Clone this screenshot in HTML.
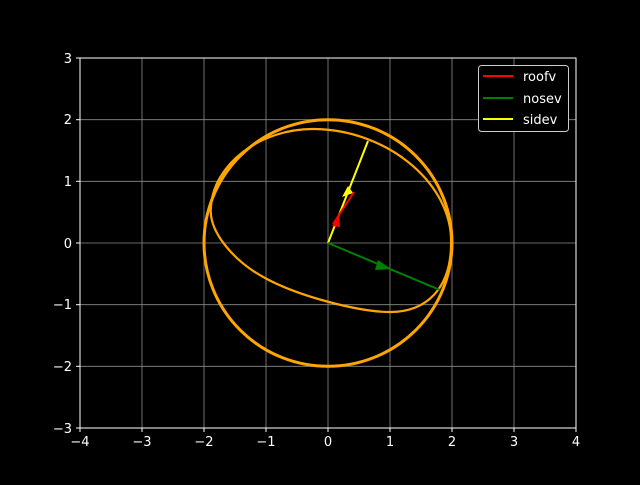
<!DOCTYPE html>
<html><head><style>
body{margin:0;background:#000;width:640px;height:480px;overflow:hidden}
svg text{font-family:"DejaVu Sans","Liberation Sans",sans-serif;font-size:13px;fill:#fff}
</style></head><body>
<svg width="640" height="480" viewBox="0 0 640 480" xmlns="http://www.w3.org/2000/svg">
<rect width="640" height="480" fill="#000"/>
<g stroke="#8c8c8c" stroke-width="0.8">
<line x1="142" y1="58" x2="142" y2="428"/><line x1="204" y1="58" x2="204" y2="428"/><line x1="266" y1="58" x2="266" y2="428"/><line x1="328" y1="58" x2="328" y2="428"/><line x1="390" y1="58" x2="390" y2="428"/><line x1="452" y1="58" x2="452" y2="428"/><line x1="514" y1="58" x2="514" y2="428"/>
<line x1="80" y1="119.7" x2="576" y2="119.7"/><line x1="80" y1="181.3" x2="576" y2="181.3"/><line x1="80" y1="243" x2="576" y2="243"/><line x1="80" y1="304.7" x2="576" y2="304.7"/><line x1="80" y1="366.3" x2="576" y2="366.3"/>
</g>
<g fill="none" stroke="#ffa500">
<ellipse cx="328" cy="243" rx="124" ry="123.3" stroke-width="3"/>
<path stroke-width="2.2" d="M211,207 C213,165 260,128 315,129 C385,130 448,180 451,237 C453,290 425,312 390,312 C360,312 300,297 265,278 C235,262 208,232 211,207 Z"/>
</g>
<line x1="328" y1="243" x2="368" y2="141" stroke="#ffff00" stroke-width="2"/>
<polygon points="348,186 342,197 353,193" fill="#ffff00"/>
<line x1="333" y1="224" x2="354" y2="192" stroke="#ff0000" stroke-width="2"/>
<polygon points="339,214 332,226 340,227" fill="#ff0000"/>
<line x1="328" y1="243" x2="440" y2="290" stroke="#008000" stroke-width="2"/>
<polygon points="391,269 378,260 375,270" fill="#008000"/>
<rect x="80" y="58" width="496" height="370" fill="none" stroke="#fff" stroke-width="1"/>
<g stroke="#fff"><line x1="80" y1="428" x2="80" y2="432"/><line x1="142" y1="428" x2="142" y2="432"/><line x1="204" y1="428" x2="204" y2="432"/><line x1="266" y1="428" x2="266" y2="432"/><line x1="328" y1="428" x2="328" y2="432"/><line x1="390" y1="428" x2="390" y2="432"/><line x1="452" y1="428" x2="452" y2="432"/><line x1="514" y1="428" x2="514" y2="432"/><line x1="576" y1="428" x2="576" y2="432"/>
<line x1="76" y1="58" x2="80" y2="58"/><line x1="76" y1="119.7" x2="80" y2="119.7"/><line x1="76" y1="181.3" x2="80" y2="181.3"/><line x1="76" y1="243" x2="80" y2="243"/><line x1="76" y1="304.7" x2="80" y2="304.7"/><line x1="76" y1="366.3" x2="80" y2="366.3"/><line x1="76" y1="428" x2="80" y2="428"/></g>
<g text-anchor="middle"><text x="80" y="446">−4</text><text x="142" y="446">−3</text><text x="204" y="446">−2</text><text x="266" y="446">−1</text><text x="328" y="446">0</text><text x="390" y="446">1</text><text x="452" y="446">2</text><text x="514" y="446">3</text><text x="576" y="446">4</text></g>
<g text-anchor="end"><text x="72" y="63">3</text><text x="72" y="124">2</text><text x="72" y="186">1</text><text x="72" y="248">0</text><text x="72" y="309">−1</text><text x="72" y="371">−2</text><text x="72" y="433">−3</text></g>
<rect x="478.5" y="65.5" width="90" height="66" rx="3" fill="#000" stroke="#ccc" stroke-width="1"/>
<line x1="483" y1="76" x2="513" y2="76" stroke="#ff0000" stroke-width="2"/>
<line x1="483" y1="98" x2="513" y2="98" stroke="#008000" stroke-width="2"/>
<line x1="483" y1="119" x2="513" y2="119" stroke="#ffff00" stroke-width="2"/>
<text x="523" y="81">roofv</text><text x="523" y="103">nosev</text><text x="523" y="124">sidev</text>
</svg>
</body></html>
